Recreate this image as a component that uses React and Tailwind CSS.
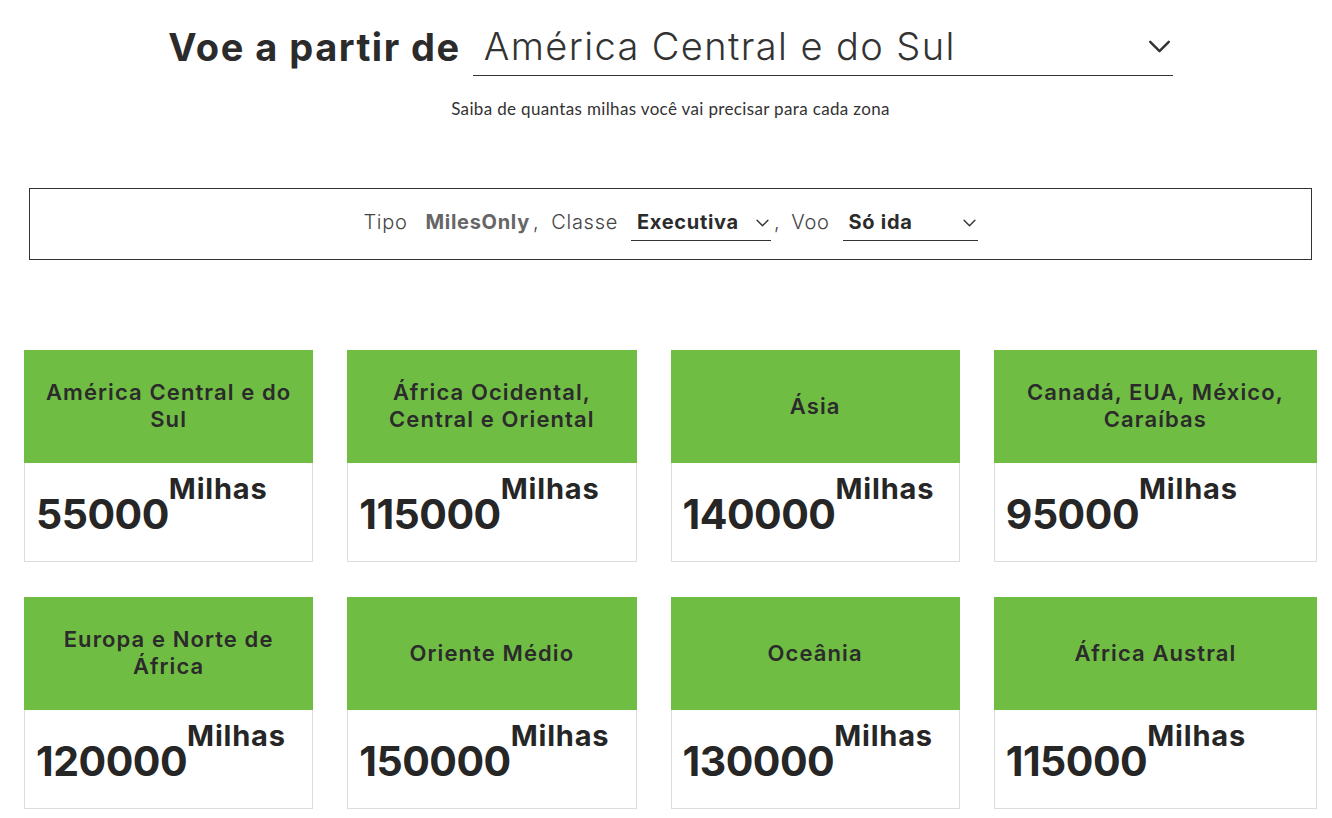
import React from 'react';

const zones = [
    { name: 'América Central e do Sul', miles: '55000' },
    { name: 'África Ocidental, Central e Oriental', miles: '115000' },
    { name: 'Ásia', miles: '140000' },
    { name: 'Canadá, EUA, México, Caraíbas', miles: '95000' },
    { name: 'Europa e Norte de África', miles: '120000' },
    { name: 'Oriente Médio', miles: '150000' },
    { name: 'Oceânia', miles: '130000' },
    { name: 'África Austral', miles: '115000' },
];

const Chevron = ({ className }) => (
    <svg viewBox="0 0 24 14" fill="none" stroke="currentColor" className={className}>
        <path d="M2 2l10 10 10-10" strokeWidth={2.6} strokeLinecap="round" strokeLinejoin="round" />
    </svg>
);

const head = { fontFamily: 'Inter, "DejaVu Sans", sans-serif' };
const body = { fontFamily: 'Lato, "Liberation Sans", sans-serif' };

function ZoneCard({ zone, last }) {
    return (
        <div className={`w-1/4 ${last ? '' : 'pr-[34px]'}`}>
            <div className="h-[113px] bg-[#70bd44] flex items-center justify-center text-center px-[14px]">
                <h3 className="text-[22px] leading-[27px] font-semibold tracking-[1.1px] text-[#2b2b2b]" style={head}>
                    {zone.name}
                </h3>
            </div>
            <div className="h-[99px] border border-t-0 border-[#dcdcdc] bg-white flex items-start pl-[11px] pt-[11px] text-[#262626]" style={head}>
                <span className="mt-[20px] text-[41px] leading-none font-bold tracking-[-0.5px]">{zone.miles}</span>
                <span className="text-[29px] leading-none font-bold tracking-[0.8px]">Milhas</span>
            </div>
        </div>
    );
}

function SmallSelect({ value, width }) {
    return (
        <div className={`inline-flex items-center justify-between border-b border-[#333] pl-[6px] pr-[2px] pb-[3px] ${width}`}>
            <span className="font-bold text-[#2b2b2b]">{value}</span>
            <Chevron className="w-[13px] h-[8px] text-[#333] mt-[3px]" />
        </div>
    );
}

export default function App() {
    return (
        <div className="w-full overflow-hidden bg-white">
            <div className="w-[1341px]">
                <div className="flex justify-center items-end gap-3 pt-[22px]" style={head}>
                    <h1 className="text-[38px] font-bold tracking-[1.5px] text-[#2b2b2b] leading-[48px] pb-[5px]">Voe a partir de</h1>
                    <div className="w-[700px] flex items-center justify-between border-b border-[#333] pl-[11px] pr-[2px] pb-[5px]">
                        <span className="text-[38px] font-light tracking-[1.4px] text-[#333] leading-[48px]">América Central e do Sul</span>
                        <Chevron className="w-[23px] h-[13px] text-[#333]" />
                    </div>
                </div>
                <p className="text-center text-[17px] tracking-[0.35px] text-[#333] mt-[20px]" style={body}>
                    Saiba de quantas milhas você vai precisar para cada zona
                </p>

                <div className="mx-[29px] mt-[66px] h-[72px] border border-[#333] flex items-center justify-center text-[20px] tracking-[0.7px] text-[#444]" style={head}>
                    <div className="flex items-baseline">
                        <span className="font-light mr-[18px]">Tipo</span>
                        <span className="font-bold text-[#666]">MilesOnly</span>
                        <span className="font-light mr-[12px] ml-[3px]">,</span>
                        <span className="font-light mr-[13px]">Classe</span>
                        <SmallSelect value="Executiva" width="w-[140px]" />
                        <span className="font-light mr-[11px] ml-[3px]">,</span>
                        <span className="font-light mr-[13px]">Voo</span>
                        <SmallSelect value="Só ida" width="w-[135px]" />
                    </div>
                </div>

                <div className="px-[24px] mt-[90px] flex flex-col gap-[35px]">
                    {[0, 4].map((start) => (
                        <div key={start} className="flex">
                            {zones.slice(start, start + 4).map((z, i) => (
                                <ZoneCard key={z.name} zone={z} last={i === 3} />
                            ))}
                        </div>
                    ))}
                </div>
            </div>
        </div>
    );
}
